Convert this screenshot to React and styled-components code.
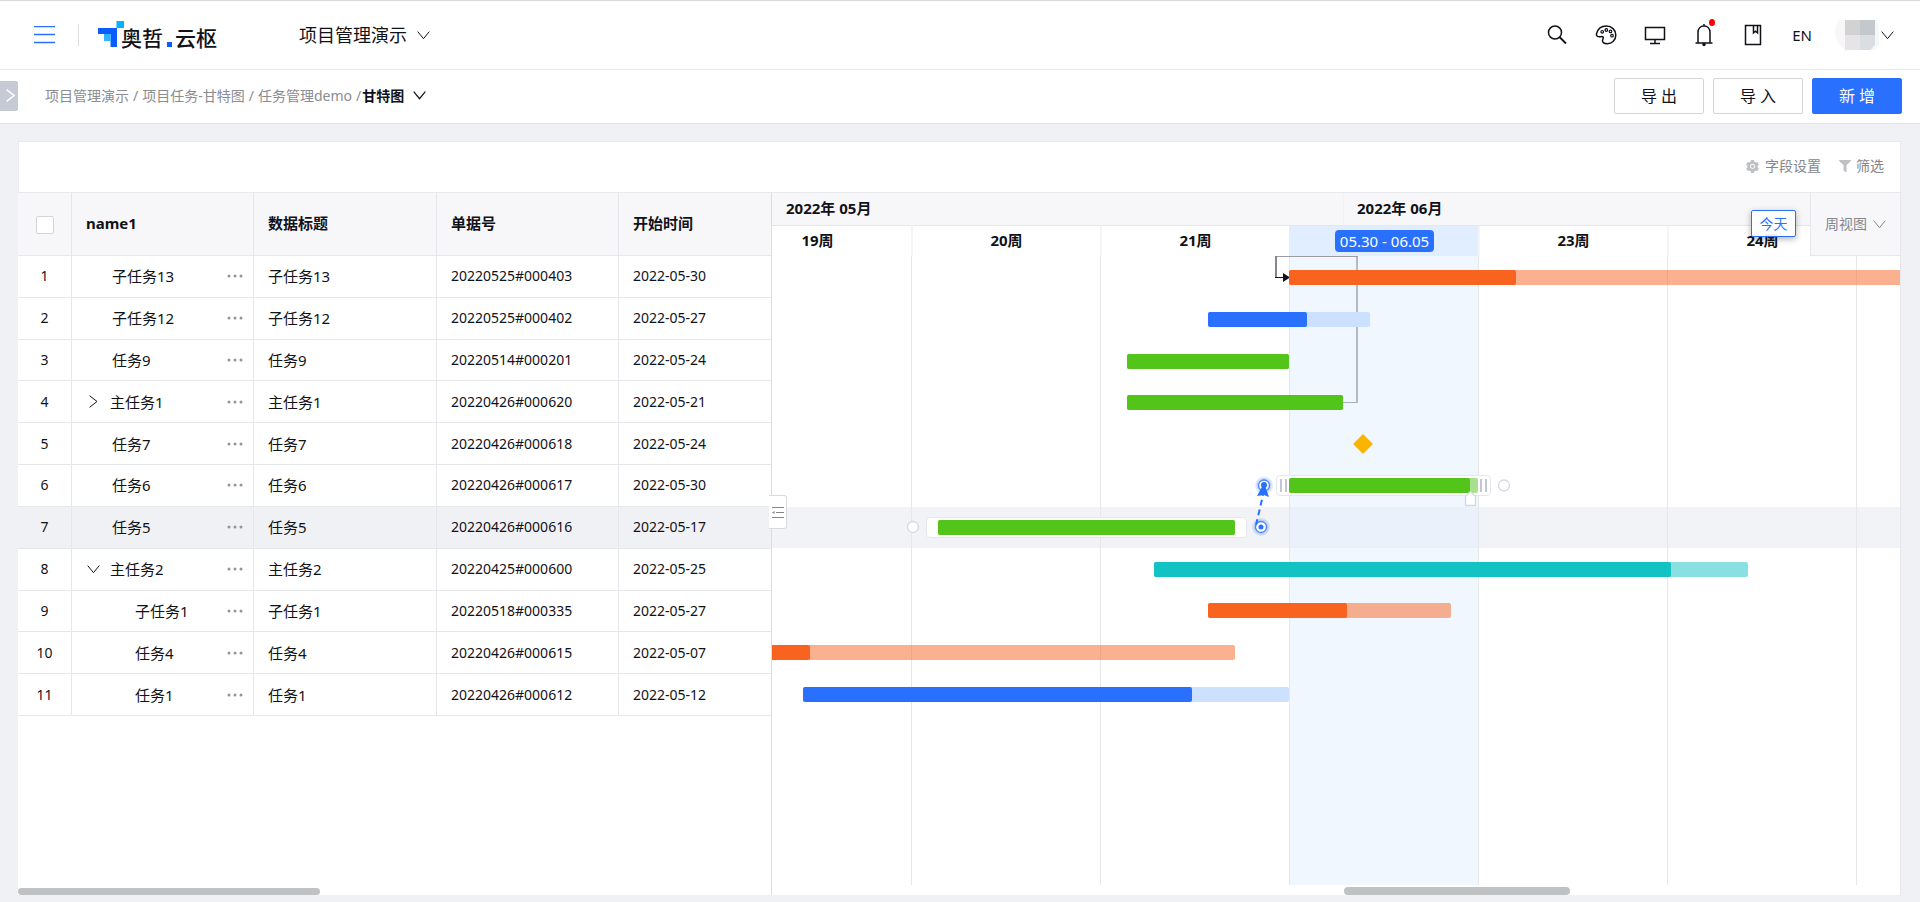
import { useState } from 'react';
import styled, { createGlobalStyle, css } from 'styled-components';
import { AiFillSetting } from 'react-icons/ai';
import { FaFilter } from 'react-icons/fa';

const DAY = 27;
const WEEK = DAY * 7;
const SCROLLED = 50;
const ORIGIN = Date.UTC(2022, 4, 9);

const COLORS = {
  blue: { main: '#2970ff', rest: '#cce1ff' },
  green: { main: '#52c41a', rest: 'rgba(82, 196, 26, 0.5)' },
  orange: { main: '#f86320', rest: 'rgba(248, 99, 32, 0.5)' },
  teal: { main: '#13c2c2', rest: 'rgba(19, 194, 194, 0.5)' },
};

const TASKS = [
  { name: '子任务13', code: '20220525#000403', start: '2022-05-30', days: 28, done: 30, color: 'orange' },
  { name: '子任务12', code: '20220525#000402', start: '2022-05-27', days: 6, done: 61, color: 'blue' },
  { name: '任务9', code: '20220514#000201', start: '2022-05-24', days: 6, done: 100, color: 'green' },
  { name: '主任务1', code: '20220426#000620', start: '2022-05-21', from: '2022-05-24', days: 8, done: 100, color: 'green', toggle: 'closed' },
  { name: '任务7', code: '20220426#000618', start: '2022-05-24', milestone: '2022-06-01' },
  { name: '任务6', code: '20220426#000617', start: '2022-05-30', days: 7, done: 96, color: 'green', framed: true, resizable: true },
  { name: '任务5', code: '20220426#000616', start: '2022-05-17', days: 11, done: 100, color: 'green', framed: true, active: true },
  { name: '主任务2', code: '20220425#000600', start: '2022-05-25', days: 22, done: 87, color: 'teal', toggle: 'open' },
  { name: '子任务1', code: '20220518#000335', start: '2022-05-27', days: 9, done: 57, color: 'orange', level: 1 },
  { name: '任务4', code: '20220426#000615', start: '2022-05-07', days: 21, done: 25, color: 'orange', level: 1 },
  { name: '任务1', code: '20220426#000612', start: '2022-05-12', days: 18, done: 80, color: 'blue', level: 1 },
];

// the last week is only partly in view and carries no label
const WEEKS = ['19周', '20周', '21周', '22周', '23周', '24周', ''];
const CURRENT_WEEK = '22周';

const dayOffset = (date) => ((Date.parse(date) - ORIGIN) / 86400000) * DAY;

const GlobalStyle = createGlobalStyle`
  * {
    box-sizing: border-box;
  }
  body {
    margin: 0;
    background: #f0f1f5;
    color: #111218;
    font-family: 'Noto Sans', 'Noto Sans CJK SC', sans-serif;
    font-size: 14px;
    line-height: 20px;
  }
  button,
  select {
    font: inherit;
    color: inherit;
    cursor: pointer;
  }
`;

const Page = styled.div`
  display: flex;
  flex-direction: column;
  min-height: 100vh;
  border-top: 1px solid #d9d9d9;
`;

const IconButton = styled.button`
  display: inline-flex;
  align-items: center;
  justify-content: center;
  position: relative;
  padding: 0;
  border: none;
  background: none;
`;

const TopBar = styled.header`
  display: flex;
  align-items: center;
  height: 69px;
  padding: 0 26px 0 34px;
  background: #fff;
  border-bottom: 1px solid #e8e9eb;
`;

const Divider = styled.span`
  width: 1px;
  height: 22px;
  margin: 0 19px 0 23px;
  background: #dcdde0;
`;

const Logo = styled.a`
  display: flex;
  align-items: flex-end;
  color: #111218;
  text-decoration: none;
  font-size: 21px;
  font-weight: 500;
  line-height: 28px;
`;

const LogoText = styled.span`
  font-family: 'Noto Sans CJK SC', sans-serif;
  padding-top: 4px;
`;

const LogoMark = styled.svg`
  align-self: center;
  margin-right: -3px;
  margin-bottom: 2px;
`;

const LogoDot = styled.i`
  width: 5px;
  height: 5px;
  margin: 0 3px 4px 4px;
  background: #0a5cff;
`;

const AppSwitch = styled.button`
  display: flex;
  align-items: center;
  gap: 10px;
  margin-left: 82px;
  padding: 0;
  border: none;
  background: none;
  font-size: 18px;
  line-height: 26px;
`;

const Tools = styled.div`
  display: flex;
  align-items: center;
  gap: 25px;
  margin-left: auto;
`;

const ToolButton = styled(IconButton)`
  width: 24px;
  height: 26px;
  font-size: 15px;
`;

const Dot = styled.span`
  position: absolute;
  top: -3px;
  right: 1px;
  width: 6px;
  height: 7px;
  border-radius: 50%;
  background: #f00;
`;

const Account = styled(IconButton)`
  gap: 2px;
  margin-left: -4px;
`;

const SubBar = styled.div`
  display: flex;
  align-items: center;
  height: 54px;
  padding-right: 18px;
  padding-bottom: 2px;
  background: #fff;
  border-bottom: 1px solid #e2e3e6;
`;

const SideTab = styled(IconButton)`
  width: 18px;
  height: 30px;
  padding-left: 3px;
  margin-right: 27px;
  background: #c5cad4;
  border-radius: 0 2px 2px 0;
  color: #fff;
`;

const Crumbs = styled.nav`
  display: flex;
  align-items: center;
  gap: 4px;
  color: #8b8c92;

  a {
    color: inherit;
    text-decoration: none;
  }
`;

const CurrentView = styled.button`
  display: flex;
  align-items: center;
  gap: 9px;
  padding: 0;
  margin-left: -3px;
  border: none;
  background: none;
  color: #111218;
  font-weight: 700;
`;

const Actions = styled.div`
  display: flex;
  gap: 9px;
  margin-left: auto;
`;

const Button = styled.button`
  width: 90px;
  height: 36px;
  padding: 0;
  border: 1px solid ${(props) => (props.$primary ? '#2970ff' : '#d4d5d9')};
  border-radius: 2px;
  background: ${(props) => (props.$primary ? '#2970ff' : '#fff')};
  color: ${(props) => (props.$primary ? '#fff' : '#111218')};
  font-size: 16px;
`;

const Panel = styled.main`
  display: flex;
  flex: 1;
  flex-direction: column;
  margin: 17px 19px 7px 18px;
`;

const Toolbar = styled.div`
  display: flex;
  align-items: center;
  justify-content: flex-end;
  gap: 18px;
  height: 52px;
  padding-right: 16px;
  padding-bottom: 2px;
  background: #fff;
  border: 1px solid #e8e9eb;
`;

const ToolbarButton = styled(IconButton)`
  gap: 5px;
  color: #85868c;

  svg {
    color: #bfc0c4;
  }
`;

const Gantt = styled.div`
  display: flex;
  flex: 1;
  background: #fff;
`;

const TablePane = styled.section`
  display: flex;
  flex-direction: column;
  flex: none;
  position: relative;
  z-index: 1;
  width: 754px;
  border-right: 1px solid #dcdde0;
`;

const Table = styled.table`
  width: 753px;
  height: 523px;
  table-layout: fixed;
  border-collapse: separate;
  border-spacing: 0;

  th,
  td {
    padding: 0 14px;
    border-right: 1px solid #e6e7ea;
    border-bottom: 1px solid #e6e7ea;
    text-align: left;
    white-space: nowrap;
  }
  th:last-child,
  td:last-child {
    border-right: none;
  }
  th:first-child,
  td:first-child {
    padding: 0;
    text-align: center;
  }
  thead th {
    height: 63px;
    padding-bottom: 2px;
    background: #f7f7fa;
    font-size: 15px;
    font-weight: 700;
  }
`;

const Row = styled.tr`
  background: ${(props) => (props.$active ? '#f0f1f5' : '#fff')};
`;

const Checkbox = styled.input`
  appearance: none;
  display: block;
  width: 18px;
  height: 18px;
  margin: 2px auto 0;
  border: 1px solid #d4d5d9;
  border-radius: 2px;
  background: #fff;
`;

const TitleCell = styled.td`
  font-size: 15px;
`;

const NameBox = styled.div`
  display: flex;
  align-items: center;
  padding-left: ${(props) => (props.$level ? 49 : props.$toggle ? 0 : 26)}px;
`;

const Toggle = styled(IconButton)`
  width: 14px;
  height: 14px;
  margin-right: 10px;
`;

const More = styled(IconButton)`
  width: 16px;
  height: 16px;
  margin-left: auto;
  margin-right: -4px;
`;

const CollapseTab = styled(IconButton)`
  position: absolute;
  top: 302px;
  right: -16px;
  width: 18px;
  height: 34px;
  border: 1px solid #d9dade;
  border-left: none;
  border-radius: 0 3px 3px 0;
  background: #fff;
`;

const ScrollThumb = styled.div`
  width: ${(props) => props.$width}px;
  height: ${(props) => props.$height}px;
  margin-top: auto;
  margin-left: ${(props) => props.$left || 0}px;
  border-radius: 4px;
  background: #c0c1c2;
`;

const TimePane = styled.section`
  display: flex;
  flex: 1;
  flex-direction: column;
  position: relative;
  min-width: 0;
  overflow: hidden;
  border-right: 1px solid #e6e7eb;
`;

const Months = styled.div`
  display: flex;
  height: 33px;
  background: #f7f7fa;
  border-bottom: 1px solid #e6e7ea;
`;

const Month = styled.div`
  flex: ${(props) => (props.$width ? `0 0 ${props.$width}px` : '1')};
  padding: 5px 13px;
  border-left: 1px solid ${(props) => (props.$width ? 'transparent' : '#f2f2f5')};
  font-size: 15px;
  font-weight: 700;
`;

const Weeks = styled.div`
  display: flex;
  height: 30px;
  margin-left: -${SCROLLED}px;
`;

const Week = styled.div`
  display: flex;
  flex: none;
  align-items: center;
  justify-content: center;
  width: ${WEEK}px;
  padding-bottom: 2px;
  border-left: 2px solid #f5f5f8;
  font-size: 15px;
  font-weight: 700;
  ${(props) =>
    props.$current &&
    css`
      padding-bottom: 0;
      background: #e1eeff;
      border-color: #e1eeff;
      font-weight: 400;
    `}
`;

const WeekRange = styled.span`
  padding: 1px 5px;
  border-radius: 4px;
  background: #2970ff;
  color: #fff;
`;

const TodayButton = styled.button`
  position: absolute;
  top: 17px;
  right: 104px;
  width: 45px;
  height: 27px;
  padding: 0;
  border: 1px solid #2970ff;
  border-radius: 2px;
  background: rgba(255, 255, 255, 0.92);
  box-shadow: 0 2px 6px rgba(0, 0, 0, 0.3);
  color: #2970ff;
`;

const ViewPicker = styled.label`
  display: flex;
  align-items: center;
  position: absolute;
  top: 0;
  right: 0;
  width: 90px;
  height: 63px;
  padding-left: 14px;
  background: #f7f7fa;
  border-left: 1px solid #e6e7ea;
  border-bottom: 1px solid #e6e7ea;
  color: #85868c;

  select {
    appearance: none;
    width: 48px;
    padding: 0;
    border: none;
    background: none;
  }
`;

const Canvas = styled.div`
  flex: 1;
  position: relative;
  min-height: 460px;
  margin-left: -${SCROLLED}px;
  margin-bottom: 2px;
  overflow: hidden;
`;

const GridLines = styled.div`
  display: flex;
  position: absolute;
  inset: 0;
`;

const GridWeek = styled.div`
  flex: none;
  width: ${WEEK}px;
  border-left: 1px solid #e6e7eb;
  background: ${(props) => (props.$current ? 'rgba(225, 239, 255, 0.5)' : 'none')};
`;

const Overlay = styled.svg`
  position: absolute;
  inset: 0;
  width: 100%;
  height: 100%;
  pointer-events: none;
`;

const Lanes = styled.div`
  display: grid;
  grid-template-rows: repeat(11, 1fr);
  position: absolute;
  inset: 0 0 auto;
  height: 459px;
  padding-top: 1px;
`;

const Band = styled.div`
  background: ${(props) => (props.$active ? '#f2f3f7' : 'none')};
`;

const Lane = styled.div`
  display: flex;
  align-items: center;
`;

const Bar = styled.div`
  flex: none;
  height: 15px;
  border-radius: 2px;
  background: ${(props) => props.$color.rest};
`;

const Done = styled.div`
  height: 100%;
  border-radius: 2px;
  background: ${(props) => props.$color.main};
`;

const Frame = styled.div`
  flex: none;
  padding: 2px 11px;
  border: 1px solid #e6e7ee;
  border-radius: 4px;
  background: #fff;
  ${(props) =>
    props.$resizable &&
    css`
      display: flex;
      align-items: center;
      gap: 2px;
      padding: 2px 3px;
    `}
`;

const Grip = styled.i`
  width: 7px;
  height: 13px;
  border: 2px solid #c3c7d2;
  border-width: 0 2px;
`;

const Milestone = styled.div`
  width: 14px;
  height: 14px;
  background: #fab400;
  transform: rotate(45deg);
`;

const Chevron = ({ width = 13, open = true, strokeWidth = 1 }) =>
  open ? (
    <svg width={width} height="9" viewBox="0 0 13 9" fill="none" stroke="currentColor" strokeWidth={strokeWidth}>
      <path d="M.7.6 6.5 7.7 12.3.6" />
    </svg>
  ) : (
    <svg width="9" height="13" viewBox="0 0 9 13" fill="none" stroke="currentColor" strokeWidth={strokeWidth}>
      <path d="M.6.7 8 6.5.6 12.3" />
    </svg>
  );

const Mark = () => (
  <LogoMark width="26" height="27" viewBox="0 0 26 27">
    <path d="M0 7h19v19h-6.500V13H0z" fill="#0a5cff" />
    <path d="M6 13h6.500v7H6z" fill="#2cb5ff" />
    <path d="M18.500 0H26v7h-7.500z" fill="#00b2ff" />
  </LogoMark>
);

const Icon = ({ children, width = 22, height = 22 }) => (
  <svg width={width} height={height} viewBox={`0 0 ${width} ${height}`} fill="none" stroke="#111218" strokeWidth="1.5">
    {children}
  </svg>
);

const Header = () => (
  <TopBar>
    <IconButton aria-label="菜单">
      <svg width="21" height="18" viewBox="0 0 21 18" stroke="#2970ff" strokeWidth="1.300">
        <path d="M0 .5h21M0 8.500h21M0 16.500h21" />
      </svg>
    </IconButton>
    <Divider />
    <Logo href="#">
      <Mark />
      <LogoText>奥哲</LogoText>
      <LogoDot />
      <LogoText>云枢</LogoText>
    </Logo>
    <AppSwitch>
      项目管理演示
      <Chevron />
    </AppSwitch>
    <Tools>
      <ToolButton aria-label="搜索">
        <Icon>
          <circle cx="9" cy="8.500" r="6.500" />
          <path d="m13.500 13 6.500 6.500" strokeWidth="1.800" />
        </Icon>
      </ToolButton>
      <ToolButton aria-label="主题">
        <Icon>
          <path d="M1.500 9.800C2.800 4.900 6.500 2 11.300 2c5.500 0 9.500 4 9.500 9 0 5.200-3.800 8.700-8.600 8.700-2.700 0-4.700-1-4.700-2.900 0-1.500.9-2.100.7-3.400-.3-1.500-2-.6-3.700-.6-2 0-3.500-1-3-3Z" />
          <g strokeWidth="1.200">
            <circle cx="7.200" cy="7.800" r="1.300" />
            <circle cx="11.300" cy="6" r="1.300" />
            <circle cx="15.500" cy="7.400" r="1.300" />
            <circle cx="17" cy="11.700" r="1.300" />
          </g>
        </Icon>
      </ToolButton>
      <ToolButton aria-label="工作台">
        <Icon>
          <path d="M1.500 3.500h19v12h-19zM11 15.500v4M6 19.500h10" />
        </Icon>
      </ToolButton>
      <ToolButton aria-label="通知">
        <Icon height={24}>
          <path d="M5 20V9.500C5 5.500 7.500 3 11 3s6 2.500 6 6.500V20M2.500 20h17M11 1v2" />
          <circle cx="11" cy="21.500" r="1" fill="#111218" />
        </Icon>
        <Dot />
      </ToolButton>
      <ToolButton aria-label="文档">
        <Icon>
          <path d="M3.500 1.500h15v19h-15zM11.500 2v7l2-1.700 2 1.700V2" />
        </Icon>
      </ToolButton>
      <ToolButton>EN</ToolButton>
      <Account aria-label="账户">
        <svg width="44" height="30" viewBox="0 0 44 30">
          <path d="M4 0h36a21 21 0 0 1 0 30H10A21 21 0 0 1 4 0z" fill="#f7f7f7" />
          <path d="M10 0h15v15H10z" fill="#d2d2d3" />
          <path d="M25 0h15v15H25z" fill="#c4c8cb" />
          <path d="M10 15h15v15H10z" fill="#e6e4e6" />
          <path d="M25 15h15v10l-5 5H25z" fill="#dadee2" />
        </svg>
        <Chevron />
      </Account>
    </Tools>
  </TopBar>
);

const TaskTable = () => (
  <Table>
    <colgroup>
      <col width="54" />
      <col width="182" />
      <col width="183" />
      <col width="182" />
      <col width="152" />
    </colgroup>
    <thead>
      <tr>
        <th>
          <Checkbox type="checkbox" aria-label="全选" />
        </th>
        <th>name1</th>
        <th>数据标题</th>
        <th>单据号</th>
        <th>开始时间</th>
      </tr>
    </thead>
    <tbody>
      {TASKS.map((task, index) => (
        <Row key={task.code} $active={task.active}>
          <td>{index + 1}</td>
          <TitleCell>
            <NameBox $level={task.level} $toggle={task.toggle}>
              {task.toggle && (
                <Toggle aria-label="展开">
                  <Chevron open={task.toggle === 'open'} />
                </Toggle>
              )}
              {task.name}
              <More aria-label="更多">
                <svg width="16" height="4" fill="#94959b">
                  <circle cx="2" cy="2" r="1.500" />
                  <circle cx="8" cy="2" r="1.500" />
                  <circle cx="14" cy="2" r="1.500" />
                </svg>
              </More>
            </NameBox>
          </TitleCell>
          <TitleCell>{task.name}</TitleCell>
          <td>{task.code}</td>
          <td>{task.start}</td>
        </Row>
      ))}
    </tbody>
  </Table>
);

const TaskBar = ({ task }) => {
  const left = dayOffset(task.from || task.start);
  const color = COLORS[task.color];
  const bar = (style) => (
    <Bar $color={color} style={style}>
      <Done $color={color} style={{ width: `${task.done}%` }} />
    </Bar>
  );
  const width = task.days * DAY;

  if (!task.framed) {
    return bar({ marginLeft: left, width });
  }
  return (
    <Frame $resizable={task.resizable} style={{ marginLeft: left - (task.resizable ? 13 : 12) }}>
      {task.resizable && <Grip />}
      {bar({ width })}
      {task.resizable && <Grip />}
    </Frame>
  );
};

const Timeline = () => {
  const [view, setView] = useState('周视图');

  return (
    <TimePane>
      <Months>
        <Month $width={571}>2022年 05月</Month>
        <Month>2022年 06月</Month>
      </Months>
      <Weeks>
        {WEEKS.map((week) => (
          <Week key={week} $current={week === CURRENT_WEEK}>
            {week === CURRENT_WEEK ? <WeekRange>05.30 - 06.05</WeekRange> : week}
          </Week>
        ))}
      </Weeks>
      <TodayButton>今天</TodayButton>
      <ViewPicker>
        <select aria-label="视图" value={view} onChange={(e) => setView(e.target.value)}>
          <option>日视图</option>
          <option>周视图</option>
          <option>月视图</option>
        </select>
        <Chevron />
      </ViewPicker>
      <Canvas>
        <Lanes>
          {TASKS.map((task) => (
            <Band key={task.code} $active={task.active} />
          ))}
        </Lanes>
        <GridLines>
          {WEEKS.map((week) => (
            <GridWeek key={week} $current={week === CURRENT_WEEK} />
          ))}
        </GridLines>
        {/* dependency between the first main task and its child */}
        <Overlay fill="none">
          <path d="M621 146.500h14" stroke="#a9adb8" />
          <path d="M635 147V.5" stroke="#b4b9c4" strokeWidth="2" />
          <path d="M636 .5h-82" stroke="#9b9ca5" />
          <path d="M554 0v21" stroke="#86878e" strokeWidth="2" />
          <path d="M553 21.500h8" stroke="#111218" />
          <path d="m561 17 7 4.500-7 4.500z" fill="#111218" />
        </Overlay>
        <Lanes>
          {TASKS.map((task) => (
            <Lane key={task.code}>
              {task.milestone ? (
                <Milestone style={{ marginLeft: dayOffset(task.milestone) + 13 }} />
              ) : (
                <TaskBar task={task} />
              )}
            </Lane>
          ))}
        </Lanes>
        {/* link being dragged from one task to another */}
        <Overlay fill="none">
          <g fill="#fff" stroke="#d6d8e1" strokeWidth="1.300">
            <circle cx="782" cy="229.500" r="5.500" />
            <circle cx="191" cy="271" r="5.500" />
            <path d="M743.500 249.500v-9l5-5 5 5v9z" />
          </g>
          <circle cx="542" cy="229.500" r="9" fill="#2970ff" fillOpacity="0.14" />
          <circle cx="542" cy="229.500" r="7.500" fill="#2970ff" fillOpacity="0.14" />
          <circle cx="539" cy="271" r="9" fill="#2970ff" fillOpacity="0.14" />
          <circle cx="539" cy="271" r="7.500" fill="#2970ff" fillOpacity="0.14" />
          <circle cx="542" cy="229.500" r="5.500" fill="#fff" stroke="#4684ff" strokeWidth="1.300" />
          <circle cx="539" cy="271" r="5.500" fill="#fff" stroke="#4684ff" strokeWidth="1.300" />
          <circle cx="542" cy="229" r="3" fill="#2970ff" />
          <circle cx="539" cy="271" r="2.500" fill="#2970ff" />
          <path d="m534 269 7.500-32" stroke="#2970ff" strokeWidth="2" strokeDasharray="6 4" />
          <path d="m542 227 5 14-5-2-7 1z" fill="#2970ff" />
        </Overlay>
      </Canvas>
      <ScrollThumb $width={226} $height={8} $left={572} />
    </TimePane>
  );
};

export default function App() {
  return (
    <Page>
      <GlobalStyle />
      <Header />
      <SubBar>
        <SideTab aria-label="展开侧栏">
          <Chevron open={false} strokeWidth={1.5} />
        </SideTab>
        <Crumbs>
          <a href="#">项目管理演示</a>/<a href="#">项目任务-甘特图</a>/<a href="#">任务管理demo</a>/
          <CurrentView>
            甘特图
            <Chevron strokeWidth={1.2} />
          </CurrentView>
        </Crumbs>
        <Actions>
          <Button>导 出</Button>
          <Button>导 入</Button>
          <Button $primary>新 增</Button>
        </Actions>
      </SubBar>
      <Panel>
        <Toolbar>
          <ToolbarButton>
            <AiFillSetting size={15} />
            字段设置
          </ToolbarButton>
          <ToolbarButton>
            <FaFilter size={12} />
            筛选
          </ToolbarButton>
        </Toolbar>
        <Gantt>
          <TablePane>
            <TaskTable />
            <CollapseTab aria-label="收起列表">
              <svg width="14" height="13" viewBox="0 0 14 13" stroke="#85868c">
                <path d="M1 1.500h12M5 6.500h8M1 11.500h12" />
                <path d="M1 6.500 3.500 5v3z" fill="#85868c" stroke="none" />
              </svg>
            </CollapseTab>
            <ScrollThumb $width={302} $height={7} />
          </TablePane>
          <Timeline />
        </Gantt>
      </Panel>
    </Page>
  );
}
